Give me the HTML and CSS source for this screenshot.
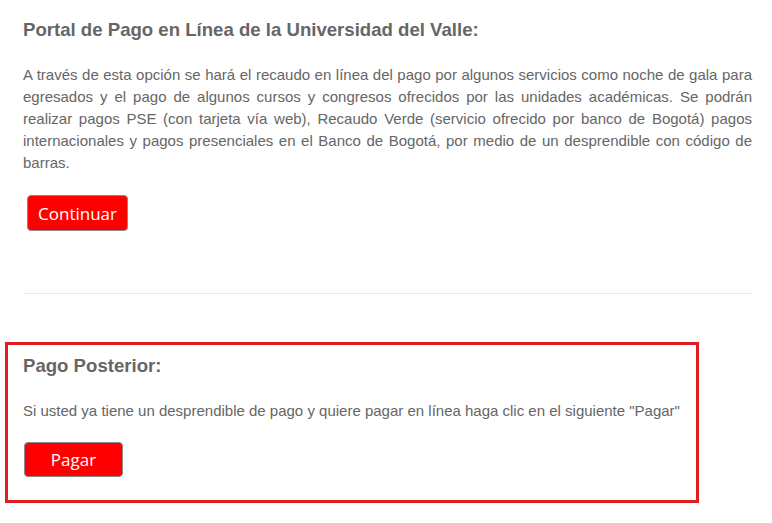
FILE: index.html
```html
<!DOCTYPE html>
<html lang="es">
<head>
    <meta charset="UTF-8">
    <meta name="viewport" content="width=device-width, initial-scale=1.0">
    <title>Portal de Pago</title>
    <link rel="stylesheet" href="styles.css">
</head>
<body>
    <section class="portal">
        <h2>Portal de Pago en Línea de la Universidad del Valle:</h2>
        <p>A través de esta opción se hará el recaudo en línea del pago por algunos servicios como noche de gala para egresados y el pago de algunos cursos y congresos ofrecidos por las unidades académicas. Se podrán realizar pagos PSE (con tarjeta vía web), Recaudo Verde (servicio ofrecido por banco de Bogotá) pagos internacionales y pagos presenciales en el Banco de Bogotá, por medio de un desprendible con código de barras.</p>
        <button type="button" class="btn btn-continuar">Continuar</button>
        <hr>
    </section>

    <section class="posterior">
        <h2>Pago Posterior:</h2>
        <p>Si usted ya tiene un desprendible de pago y quiere pagar en línea haga clic en el siguiente "Pagar"</p>
        <button type="button" class="btn btn-pagar">Pagar</button>
    </section>
</body>
</html>
```

FILE: styles.css
```css
body {
    margin: 0;
    font-family: 'Liberation Sans', Arial, sans-serif;
    color: #666;
    background: #fff;
}
h2 {
    margin: 0;
    font-size: 18.6px;
    line-height: 22px;
    font-weight: bold;
    color: #666;
}
p {
    margin: 0;
    font-size: 15px;
    line-height: 22px;
    text-align: justify;
}
.portal {
    padding: 19px 20px 0 23px;
}
.portal p {
    margin-top: 23px;
}
.portal hr {
    margin: 62px 0 0;
    border: none;
    border-top: 1px solid #e8e8e8;
}
.btn {
    display: block;
    height: 36px;
    padding: 0;
    background-color: #ff0000;
    color: white;
    border: 1px solid #8a8a8a;
    border-radius: 4px;
    font-family: 'Open Sans', sans-serif;
    font-size: 17px;
    cursor: pointer;
}
.btn-continuar {
    width: 101px;
    margin: 21px 0 0 4px;
}
.posterior {
    margin: 48px 0 20px 5px;
    width: 694px;
    box-sizing: border-box;
    border: 3px solid #e31b23;
    padding: 10px 15px 23px 15px;
}
.posterior p {
    margin-top: 23px;
}
.btn-pagar {
    width: 99px;
    height: 35px;
    margin: 20px 0 0 1px;
}
```
